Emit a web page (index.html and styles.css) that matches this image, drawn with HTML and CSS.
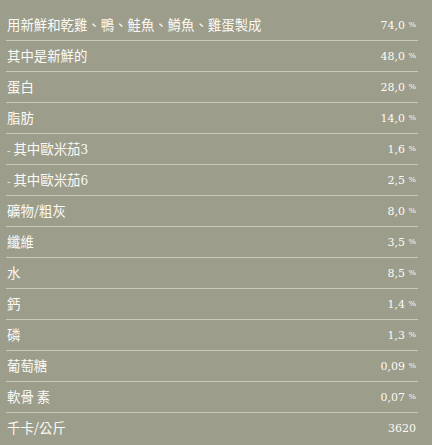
FILE: index.html
```html
<!DOCTYPE html>
<html>
  <head>
    <title>成分</title>
    <link rel="stylesheet" href="styles.css">
  </head>
  <body>
    <div class="analysis">
      <div class="row"><span class="label">用新鮮和乾雞、鴨、鮭魚、鱒魚、雞蛋製成</span><span class="value">74,0 <small>%</small></span></div>
      <div class="row"><span class="label">其中是新鮮的</span><span class="value">48,0 <small>%</small></span></div>
      <div class="row"><span class="label">蛋白</span><span class="value">28,0 <small>%</small></span></div>
      <div class="row"><span class="label">脂肪</span><span class="value">14,0 <small>%</small></span></div>
      <div class="row"><span class="label"><span class="dash">-</span> 其中歐米茄<span class="num">3</span></span><span class="value">1,6 <small>%</small></span></div>
      <div class="row"><span class="label"><span class="dash">-</span> 其中歐米茄<span class="num">6</span></span><span class="value">2,5 <small>%</small></span></div>
      <div class="row"><span class="label">礦物/粗灰</span><span class="value">8,0 <small>%</small></span></div>
      <div class="row"><span class="label">纖維</span><span class="value">3,5 <small>%</small></span></div>
      <div class="row"><span class="label">水</span><span class="value">8,5 <small>%</small></span></div>
      <div class="row"><span class="label">鈣</span><span class="value">1,4 <small>%</small></span></div>
      <div class="row"><span class="label">磷</span><span class="value">1,3 <small>%</small></span></div>
      <div class="row"><span class="label">葡萄糖</span><span class="value">0,09 <small>%</small></span></div>
      <div class="row"><span class="label">軟骨 素</span><span class="value">0,07 <small>%</small></span></div>
      <div class="row last"><span class="label">千卡/公斤</span><span class="value">3620</span></div>
    </div>
  </body>
</html>
```

FILE: styles.css
```css
body {
  margin: 0;
  background-color: #9d9d8b;
  color: #fbfbf7;
  font-family: "Noto Sans CJK TC", "Liberation Sans", sans-serif;
}
.analysis {
  width: 412px;
  margin: 10px 0 0 6px;
}
.row {
  display: flex;
  justify-content: space-between;
  align-items: center;
  border-bottom: 1px solid #c9c9bd;
  padding: 0 2px 2px 1px;
  height: 28px;
}
.row.last {
  border-bottom: none;
}
.label {
  font-size: 13.4px;
}
.dash {
  font-size: 10px;
}
.num {
  font-family: "DejaVu Serif", serif;
  font-size: 12px;
}
.value {
  font-family: "DejaVu Serif", "Liberation Serif", serif;
  font-size: 11px;
  padding-top: 3px;
}
.value small {
  font-size: 8px;
  vertical-align: 2px;
}
```
